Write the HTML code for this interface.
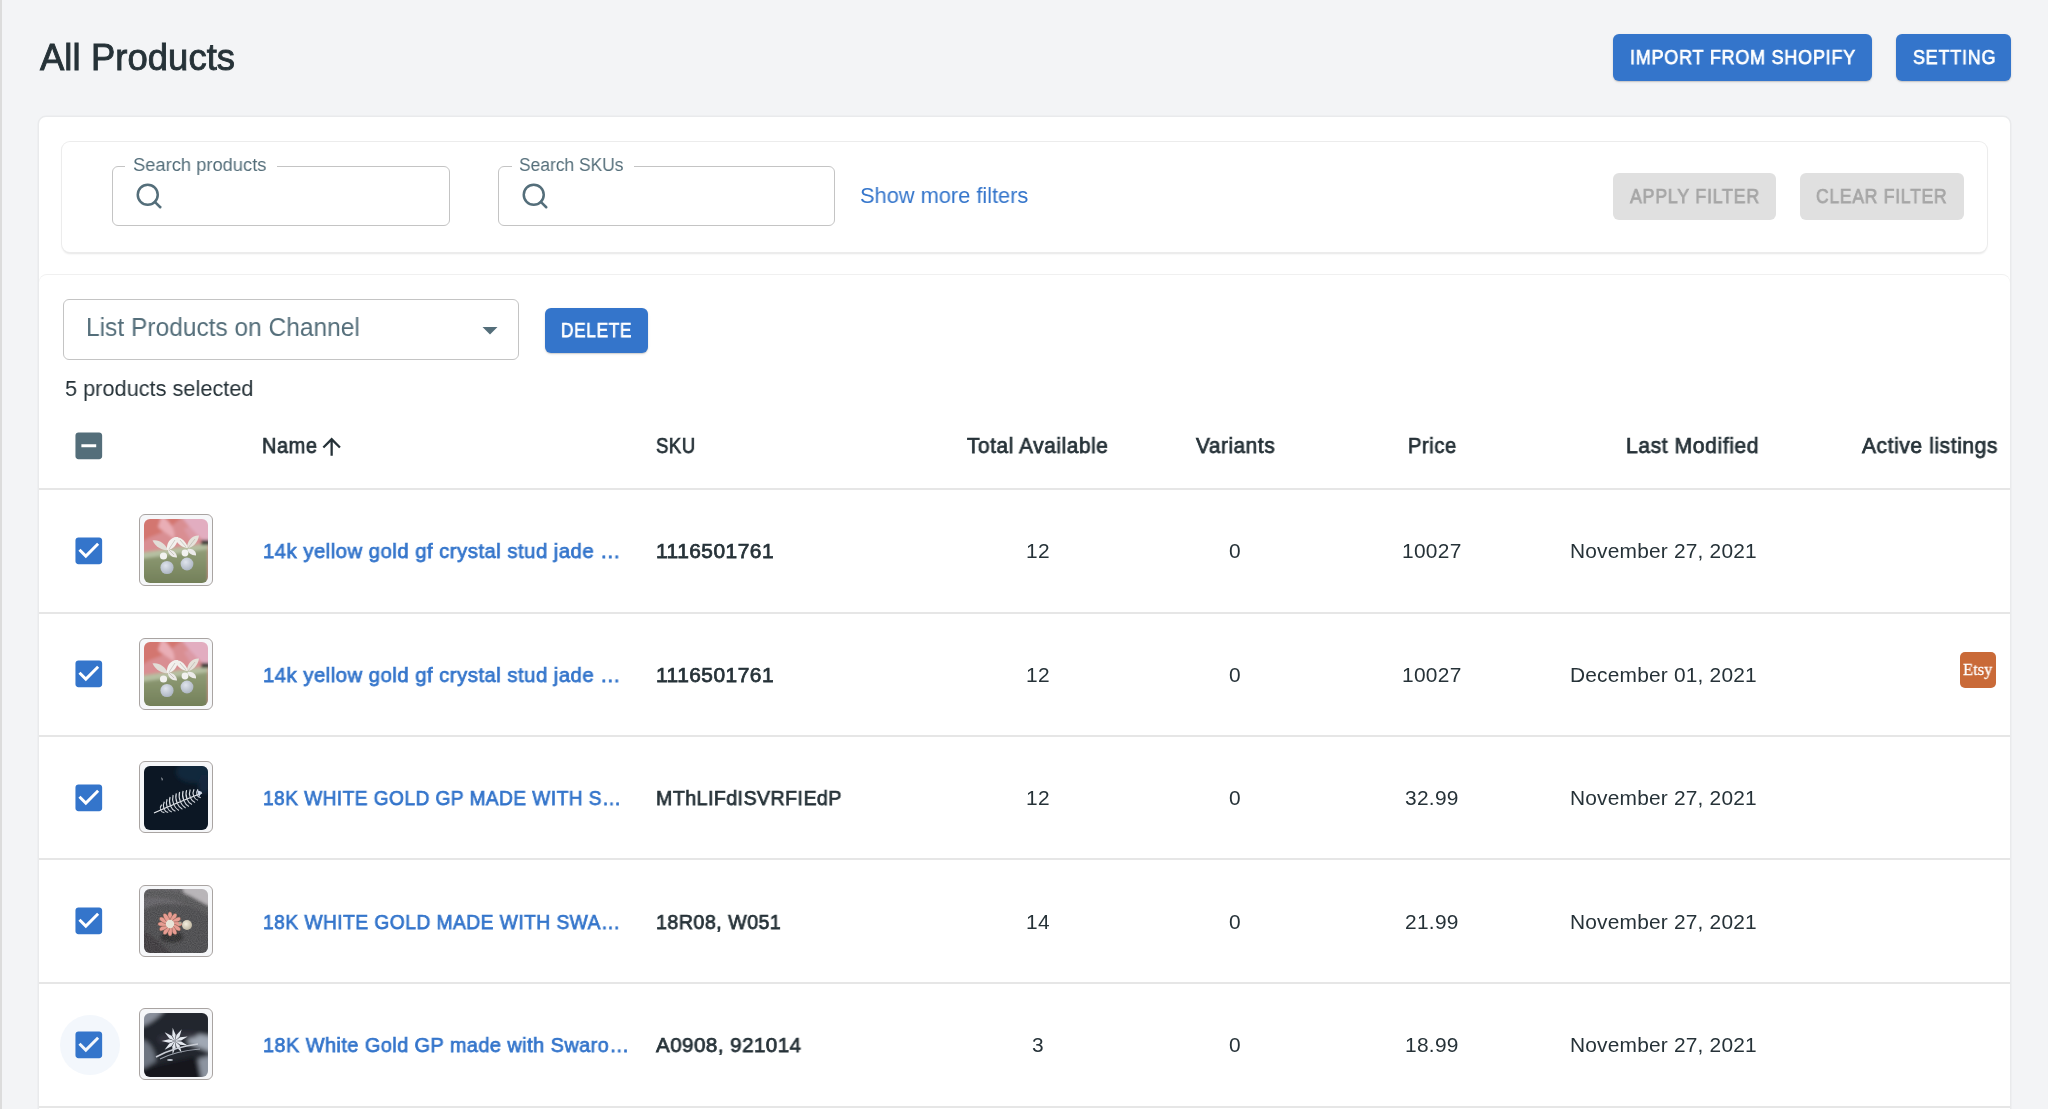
<!DOCTYPE html>
<html><head><meta charset="utf-8"><style>
html,body{margin:0;padding:0;}
body{width:2048px;height:1109px;overflow:hidden;position:relative;background:#f3f4f6;font-family:"Liberation Sans",sans-serif;}
.t{position:absolute;white-space:nowrap;will-change:transform;}
.box{position:absolute;box-sizing:border-box;}
</style></head><body>
<div class="box" style="left:0;top:0;width:2px;height:1109px;background:#dcdcdc"></div>
<div class="t" style="left:40.15px;top:39.60px;font-size:36.4px;line-height:36.4px;color:#263238;-webkit-text-stroke:0.9px #263238;letter-spacing:0.082px;">All Products</div>
<div class="box" style="left:1613px;top:34px;width:259px;height:47px;background:#3475cb;border-radius:6px;box-shadow:0 1px 1px rgba(0,0,0,0.12),0 1px 3px rgba(0,0,0,0.10);"></div>
<div class="t" style="left:1630.13px;top:47.40px;font-size:20.2px;line-height:20.2px;color:#fff;-webkit-text-stroke:0.75px #fff;letter-spacing:0.900px;transform:scaleX(0.8892);transform-origin:0 0;">IMPORT FROM SHOPIFY</div>
<div class="box" style="left:1896px;top:34px;width:115px;height:47px;background:#3475cb;border-radius:6px;box-shadow:0 1px 1px rgba(0,0,0,0.12),0 1px 3px rgba(0,0,0,0.10);"></div>
<div class="t" style="left:1912.53px;top:47.40px;font-size:20.2px;line-height:20.2px;color:#fff;-webkit-text-stroke:0.75px #fff;letter-spacing:0.900px;transform:scaleX(0.8872);transform-origin:0 0;">SETTING</div>
<div class="box" style="left:39px;top:117px;width:1971px;height:1100px;background:#fff;border-radius:7px;box-shadow:0 0 0 1.5px #e9eaec;"></div>
<div class="box" style="left:62px;top:142px;width:1925px;height:109.5px;background:#fff;border-radius:8px;box-shadow:0 0 0 1px #ececec,0 1.5px 2px rgba(0,0,0,0.10);"></div>
<div class="box" style="left:112px;top:166px;width:338px;height:60px;border:1.5px solid #c4c4c4;border-radius:6px;"></div>
<div class="box" style="left:124.6px;top:164px;width:152.9px;height:5px;background:#fff;"></div>
<div class="t" style="left:133.40px;top:156.10px;font-size:18.8px;line-height:18.8px;color:#546e7a;transform:scaleX(0.9758);transform-origin:0 0;">Search products</div>
<svg style="position:absolute;left:133.50px;top:181.10px;width:30.0px;height:30.0px" viewBox="0 0 24 24" fill="none" stroke="#546e7a" stroke-width="2" stroke-linecap="round" stroke-linejoin="round"><circle cx="11" cy="11" r="8"/><line x1="21" y1="21" x2="16.65" y2="16.65"/></svg>
<div class="box" style="left:498px;top:166px;width:337px;height:60px;border:1.5px solid #c4c4c4;border-radius:6px;"></div>
<div class="box" style="left:512px;top:164px;width:122px;height:5px;background:#fff;"></div>
<div class="t" style="left:519.00px;top:156.10px;font-size:18.8px;line-height:18.8px;color:#546e7a;transform:scaleX(0.9269);transform-origin:0 0;">Search SKUs</div>
<svg style="position:absolute;left:519.50px;top:181.10px;width:30.0px;height:30.0px" viewBox="0 0 24 24" fill="none" stroke="#546e7a" stroke-width="2" stroke-linecap="round" stroke-linejoin="round"><circle cx="11" cy="11" r="8"/><line x1="21" y1="21" x2="16.65" y2="16.65"/></svg>
<div class="t" style="left:859.80px;top:185.00px;font-size:22.2px;line-height:22.2px;color:#3475cb;transform:scaleX(0.9820);transform-origin:0 0;">Show more filters</div>
<div class="box" style="left:1613px;top:173px;width:163px;height:47px;background:#e0e0e0;border-radius:6px;"></div>
<div class="t" style="left:1629.63px;top:186.00px;font-size:20.2px;line-height:20.2px;color:#a6a6a6;-webkit-text-stroke:0.75px #a6a6a6;letter-spacing:0.900px;transform:scaleX(0.8800);transform-origin:0 0;">APPLY FILTER</div>
<div class="box" style="left:1799.5px;top:173px;width:164.0px;height:47px;background:#e0e0e0;border-radius:6px;"></div>
<div class="t" style="left:1815.72px;top:186.00px;font-size:20.2px;line-height:20.2px;color:#a6a6a6;-webkit-text-stroke:0.75px #a6a6a6;letter-spacing:0.900px;transform:scaleX(0.8655);transform-origin:0 0;">CLEAR FILTER</div>
<div class="box" style="left:39px;top:275px;width:1971px;height:900px;background:#fff;border-radius:8px;box-shadow:0 -1px 0 0 #f0f0f0;"></div>
<div class="box" style="left:63px;top:299px;width:456px;height:61px;border:1.5px solid #c4c4c4;border-radius:6px;"></div>
<div class="t" style="left:86.00px;top:315.40px;font-size:25.2px;line-height:25.2px;color:#546e7a;transform:scaleX(0.9732);transform-origin:0 0;">List Products on Channel</div>
<svg style="position:absolute;left:472.30px;top:312.30px;width:36.00px;height:36.00px;" viewBox="0 0 24 24" fill="#546e7a"><path d="M7 10l5 5 5-5z"/></svg>
<div class="box" style="left:545px;top:308px;width:103px;height:45px;background:#3475cb;border-radius:6px;box-shadow:0 1px 1px rgba(0,0,0,0.12),0 1px 3px rgba(0,0,0,0.10);"></div>
<div class="t" style="left:560.52px;top:320.60px;font-size:19.8px;line-height:19.8px;color:#fff;-webkit-text-stroke:0.75px #fff;letter-spacing:0.900px;transform:scaleX(0.8642);transform-origin:0 0;">DELETE</div>
<div class="t" style="left:64.60px;top:377.60px;font-size:22.2px;line-height:22.2px;color:#263238;transform:scaleX(0.9796);transform-origin:0 0;">5 products selected</div>
<svg style="position:absolute;left:70.95px;top:428.35px;width:35.60px;height:35.60px;" viewBox="0 0 24 24" fill="#546e7a"><path d="M19 3H5c-1.1 0-2 .9-2 2v14c0 1.1.9 2 2 2h14c1.1 0 2-.9 2-2V5c0-1.1-.9-2-2-2zm-2 10H7v-2h10v2z"/></svg>
<div class="t" style="left:262.45px;top:436.00px;font-size:21.4px;line-height:21.4px;color:#263238;-webkit-text-stroke:0.75px #263238;letter-spacing:0.600px;transform:scaleX(0.9340);transform-origin:0 0;">Name</div>
<svg style="position:absolute;left:318.30px;top:433.00px;width:27.30px;height:27.30px;" viewBox="0 0 24 24" fill="#263238"><path d="M4 12l1.41 1.41L11 7.83V20h2V7.83l5.58 5.59L20 12l-8-8-8 8z"/></svg>
<div class="t" style="left:656.22px;top:436.00px;font-size:21.4px;line-height:21.4px;color:#263238;-webkit-text-stroke:0.75px #263238;letter-spacing:0.600px;transform:scaleX(0.8666);transform-origin:0 0;">SKU</div>
<div class="t" style="left:967.47px;top:436.00px;font-size:21.4px;line-height:21.4px;color:#263238;-webkit-text-stroke:0.75px #263238;letter-spacing:0.600px;transform:scaleX(0.9734);transform-origin:0 0;">Total Available</div>
<div class="t" style="left:1195.56px;top:436.00px;font-size:21.4px;line-height:21.4px;color:#263238;-webkit-text-stroke:0.75px #263238;letter-spacing:0.600px;transform:scaleX(0.9697);transform-origin:0 0;">Variants</div>
<div class="t" style="left:1408.35px;top:436.00px;font-size:21.4px;line-height:21.4px;color:#263238;-webkit-text-stroke:0.75px #263238;letter-spacing:0.600px;transform:scaleX(0.9424);transform-origin:0 0;">Price</div>
<div class="t" style="left:1625.77px;top:436.00px;font-size:21.4px;line-height:21.4px;color:#263238;-webkit-text-stroke:0.75px #263238;letter-spacing:0.600px;transform:scaleX(0.9858);transform-origin:0 0;">Last Modified</div>
<div class="t" style="left:1862.37px;top:436.00px;font-size:21.4px;line-height:21.4px;color:#263238;-webkit-text-stroke:0.75px #263238;letter-spacing:0.600px;transform:scaleX(0.9814);transform-origin:0 0;">Active listings</div>
<div class="box" style="left:39px;top:488px;width:1971px;height:2px;background:#e6e6e6"></div>
<svg style="position:absolute;left:71.05px;top:532.70px;width:35.60px;height:35.60px;" viewBox="0 0 24 24" fill="#3475cb"><path d="M19 3H5c-1.11 0-2 .9-2 2v14c0 1.1.89 2 2 2h14c1.11 0 2-.9 2-2V5c0-1.1-.89-2-2-2zm-9 14l-5-5 1.41-1.41L10 14.17l7.59-7.59L19 8l-9 9z"/></svg>
<div class="box" style="left:139px;top:514.25px;width:74px;height:72px;border:1.5px solid #a9a4a2;border-radius:6px;background:#f6f7f9;"></div>
<div class="box" style="left:144px;top:518.75px;width:64px;height:64px;border-radius:6px;overflow:hidden;"><svg width="64" height="64" viewBox="0 0 64 64" style="display:block"><defs><filter id="b0" x="-20%" y="-20%" width="140%" height="140%"><feGaussianBlur stdDeviation="1.6"/></filter>
<filter id="s0" x="-20%" y="-20%" width="140%" height="140%"><feGaussianBlur stdDeviation="0.6"/></filter>
<linearGradient id="g0" x1="0" y1="0" x2="0" y2="1"><stop offset="0" stop-color="#96a27c"/><stop offset="1" stop-color="#6f7c55"/></linearGradient>
<radialGradient id="p0" cx="0.4" cy="0.35" r="0.7"><stop offset="0" stop-color="#dfe4ec"/><stop offset="1" stop-color="#aab3c0"/></radialGradient></defs><g filter="url(#b0)">
<rect x="-4" y="-4" width="72" height="72" fill="#d98e92"/>
<path d="M-4 -4H40C30 6 20 14 6 18L-4 24Z" fill="#d3766f"/>
<path d="M18 -4C26 4 32 10 30 20C26 16 18 12 14 8Z" fill="#e9aeb6"/>
<path d="M36 -4H68V26C58 22 50 14 44 6Z" fill="#e2adc0"/>
<path d="M44 8C52 12 56 18 50 26C46 20 42 14 40 10Z" fill="#dc9aa6"/>
<path d="M-4 34L64 24V68H-4Z" fill="url(#g0)"/>
<path d="M-4 34L64 24V30L-4 40Z" fill="#b6c0a2"/>
<rect x="57" y="21" width="9" height="5" fill="#3a3a36"/>
</g>
<g filter="url(#s0)">
<path d="M8.5 21.5C14 20 21 24 24 31C20 32 12 29 8.5 21.5Z" fill="#e2ded8"/>
<path d="M23 31C22 24 27 17 34 18C34 25 29 31 23 31Z" fill="#f3f1ee"/>
<path d="M24 31C28 30 33 34 33 38.5C28 39 24 35 24 31Z" fill="#eceae8"/>
<path d="M30.5 18.5C36 17 42 22 44 29C39 29 33 25 30.5 18.5Z" fill="#f1efeb"/>
<path d="M43 29C43 22 48 16 55 16.5C54 23 49 29 43 29Z" fill="#e6e2da"/>
<path d="M43.5 30C48 29 52.5 32 52 36.5C47 36.5 43.5 33 43.5 30Z" fill="#ecebea"/>
<path d="M25 30L31 21M25 31L30 36M42 28L36 21M44 29L51 20" stroke="#a9a59c" stroke-width="0.5" fill="none"/>
<circle cx="19.5" cy="37" r="3.6" fill="#f2f2f0"/>
<circle cx="41" cy="34" r="3.4" fill="#f2f2f0"/>
<circle cx="23" cy="48.5" r="6.6" fill="url(#p0)"/>
<circle cx="43" cy="45" r="6.4" fill="url(#p0)"/>
</g></svg></div>
<div class="t" style="left:262.86px;top:541.05px;font-size:20.9px;line-height:20.9px;color:#3475cb;-webkit-text-stroke:0.75px #3475cb;letter-spacing:0.500px;transform:scaleX(0.9715);transform-origin:0 0;">14k yellow gold gf crystal stud jade …</div>
<div class="t" style="left:656.37px;top:541.05px;font-size:20.9px;line-height:20.9px;color:#263238;-webkit-text-stroke:0.75px #263238;letter-spacing:0.500px;transform:scaleX(0.9977);transform-origin:0 0;">1116501761</div>
<div class="t" style="left:1026.22px;top:541.05px;font-size:20.9px;line-height:20.9px;color:#263238;letter-spacing:0.300px;">12</div>
<div class="t" style="left:1229.20px;top:541.05px;font-size:20.9px;line-height:20.9px;color:#263238;">0</div>
<div class="t" style="left:1402.35px;top:541.05px;font-size:20.9px;line-height:20.9px;color:#263238;letter-spacing:0.300px;">10027</div>
<div class="t" style="left:1570.25px;top:541.05px;font-size:20.9px;line-height:20.9px;color:#263238;letter-spacing:0.200px;">November 27, 2021</div>
<div class="box" style="left:39px;top:612px;width:1971px;height:2px;background:#e6e6e6"></div>
<svg style="position:absolute;left:71.05px;top:656.20px;width:35.60px;height:35.60px;" viewBox="0 0 24 24" fill="#3475cb"><path d="M19 3H5c-1.11 0-2 .9-2 2v14c0 1.1.89 2 2 2h14c1.11 0 2-.9 2-2V5c0-1.1-.89-2-2-2zm-9 14l-5-5 1.41-1.41L10 14.17l7.59-7.59L19 8l-9 9z"/></svg>
<div class="box" style="left:139px;top:637.75px;width:74px;height:72px;border:1.5px solid #a9a4a2;border-radius:6px;background:#f6f7f9;"></div>
<div class="box" style="left:144px;top:642.25px;width:64px;height:64px;border-radius:6px;overflow:hidden;"><svg width="64" height="64" viewBox="0 0 64 64" style="display:block"><defs><filter id="b1" x="-20%" y="-20%" width="140%" height="140%"><feGaussianBlur stdDeviation="1.6"/></filter>
<filter id="s1" x="-20%" y="-20%" width="140%" height="140%"><feGaussianBlur stdDeviation="0.6"/></filter>
<linearGradient id="g1" x1="0" y1="0" x2="0" y2="1"><stop offset="0" stop-color="#96a27c"/><stop offset="1" stop-color="#6f7c55"/></linearGradient>
<radialGradient id="p1" cx="0.4" cy="0.35" r="0.7"><stop offset="0" stop-color="#dfe4ec"/><stop offset="1" stop-color="#aab3c0"/></radialGradient></defs><g filter="url(#b1)">
<rect x="-4" y="-4" width="72" height="72" fill="#d98e92"/>
<path d="M-4 -4H40C30 6 20 14 6 18L-4 24Z" fill="#d3766f"/>
<path d="M18 -4C26 4 32 10 30 20C26 16 18 12 14 8Z" fill="#e9aeb6"/>
<path d="M36 -4H68V26C58 22 50 14 44 6Z" fill="#e2adc0"/>
<path d="M44 8C52 12 56 18 50 26C46 20 42 14 40 10Z" fill="#dc9aa6"/>
<path d="M-4 34L64 24V68H-4Z" fill="url(#g1)"/>
<path d="M-4 34L64 24V30L-4 40Z" fill="#b6c0a2"/>
<rect x="57" y="21" width="9" height="5" fill="#3a3a36"/>
</g>
<g filter="url(#s1)">
<path d="M8.5 21.5C14 20 21 24 24 31C20 32 12 29 8.5 21.5Z" fill="#e2ded8"/>
<path d="M23 31C22 24 27 17 34 18C34 25 29 31 23 31Z" fill="#f3f1ee"/>
<path d="M24 31C28 30 33 34 33 38.5C28 39 24 35 24 31Z" fill="#eceae8"/>
<path d="M30.5 18.5C36 17 42 22 44 29C39 29 33 25 30.5 18.5Z" fill="#f1efeb"/>
<path d="M43 29C43 22 48 16 55 16.5C54 23 49 29 43 29Z" fill="#e6e2da"/>
<path d="M43.5 30C48 29 52.5 32 52 36.5C47 36.5 43.5 33 43.5 30Z" fill="#ecebea"/>
<path d="M25 30L31 21M25 31L30 36M42 28L36 21M44 29L51 20" stroke="#a9a59c" stroke-width="0.5" fill="none"/>
<circle cx="19.5" cy="37" r="3.6" fill="#f2f2f0"/>
<circle cx="41" cy="34" r="3.4" fill="#f2f2f0"/>
<circle cx="23" cy="48.5" r="6.6" fill="url(#p1)"/>
<circle cx="43" cy="45" r="6.4" fill="url(#p1)"/>
</g></svg></div>
<div class="t" style="left:262.86px;top:664.55px;font-size:20.9px;line-height:20.9px;color:#3475cb;-webkit-text-stroke:0.75px #3475cb;letter-spacing:0.500px;transform:scaleX(0.9715);transform-origin:0 0;">14k yellow gold gf crystal stud jade …</div>
<div class="t" style="left:656.37px;top:664.55px;font-size:20.9px;line-height:20.9px;color:#263238;-webkit-text-stroke:0.75px #263238;letter-spacing:0.500px;transform:scaleX(0.9977);transform-origin:0 0;">1116501761</div>
<div class="t" style="left:1026.22px;top:664.55px;font-size:20.9px;line-height:20.9px;color:#263238;letter-spacing:0.300px;">12</div>
<div class="t" style="left:1229.20px;top:664.55px;font-size:20.9px;line-height:20.9px;color:#263238;">0</div>
<div class="t" style="left:1402.35px;top:664.55px;font-size:20.9px;line-height:20.9px;color:#263238;letter-spacing:0.300px;">10027</div>
<div class="t" style="left:1570.25px;top:664.55px;font-size:20.9px;line-height:20.9px;color:#263238;letter-spacing:0.200px;">December 01, 2021</div>
<div class="box" style="left:1960px;top:651.75px;width:36px;height:36px;border-radius:5px;background:#c96a38;"></div>
<div class="t" style="left:1963.14px;top:661.05px;font-size:17.5px;line-height:17.5px;color:#fff;-webkit-text-stroke:0.3px #fff;transform:scaleX(0.9457);transform-origin:0 0;font-family:'Liberation Serif',serif;">Etsy</div>
<div class="box" style="left:39px;top:735px;width:1971px;height:2px;background:#e6e6e6"></div>
<svg style="position:absolute;left:71.05px;top:779.70px;width:35.60px;height:35.60px;" viewBox="0 0 24 24" fill="#3475cb"><path d="M19 3H5c-1.11 0-2 .9-2 2v14c0 1.1.89 2 2 2h14c1.11 0 2-.9 2-2V5c0-1.1-.89-2-2-2zm-9 14l-5-5 1.41-1.41L10 14.17l7.59-7.59L19 8l-9 9z"/></svg>
<div class="box" style="left:139px;top:761.25px;width:74px;height:72px;border:1.5px solid #a9a4a2;border-radius:6px;background:#f6f7f9;"></div>
<div class="box" style="left:144px;top:765.75px;width:64px;height:64px;border-radius:6px;overflow:hidden;"><svg width="64" height="64" viewBox="0 0 64 64" style="display:block"><defs><filter id="b2" x="-20%" y="-20%" width="140%" height="140%"><feGaussianBlur stdDeviation="2"/></filter>
<filter id="s2" x="-20%" y="-20%" width="140%" height="140%"><feGaussianBlur stdDeviation="0.4"/></filter></defs><rect width="64" height="64" fill="#0c1724"/>
<g filter="url(#b2)"><ellipse cx="50" cy="6" rx="18" ry="11" fill="#1a3650" opacity="0.55"/><ellipse cx="60" cy="18" rx="6" ry="10" fill="#13283c"/></g>
<g filter="url(#s2)">
<path d="M10 47Q30 38 58 27" stroke="#e6e9ee" stroke-width="1.3" fill="none"/>
<path d="M16.6 44.1Q15.5 41.5 17.6 38.6" stroke="#d8dce2" stroke-width="1.15" fill="none"/><path d="M16.6 44.1Q17.5 46.3 20.4 46.6" stroke="#c9cdd4" stroke-width="1.1" fill="none"/><path d="M19.9 42.7Q18.5 39.2 20.3 35.7" stroke="#d8dce2" stroke-width="1.15" fill="none"/><path d="M19.9 42.7Q21.1 45.7 24.2 46.5" stroke="#c9cdd4" stroke-width="1.1" fill="none"/><path d="M23.2 41.4Q21.5 37.2 23.1 33.2" stroke="#d8dce2" stroke-width="1.15" fill="none"/><path d="M23.2 41.4Q24.7 44.9 27.8 46.0" stroke="#c9cdd4" stroke-width="1.1" fill="none"/><path d="M26.5 40.0Q24.6 35.3 26.1 31.0" stroke="#d8dce2" stroke-width="1.15" fill="none"/><path d="M26.5 40.0Q28.2 43.9 31.4 45.3" stroke="#c9cdd4" stroke-width="1.1" fill="none"/><path d="M29.8 38.6Q27.8 33.6 29.1 29.0" stroke="#d8dce2" stroke-width="1.15" fill="none"/><path d="M29.8 38.6Q31.6 42.8 34.9 44.4" stroke="#c9cdd4" stroke-width="1.1" fill="none"/><path d="M33.2 37.3Q31.0 32.0 32.3 27.4" stroke="#d8dce2" stroke-width="1.15" fill="none"/><path d="M33.2 37.3Q35.0 41.6 38.4 43.3" stroke="#c9cdd4" stroke-width="1.1" fill="none"/><path d="M36.5 35.9Q34.3 30.6 35.6 26.0" stroke="#d8dce2" stroke-width="1.15" fill="none"/><path d="M36.5 35.9Q38.3 40.3 41.7 41.9" stroke="#c9cdd4" stroke-width="1.1" fill="none"/><path d="M39.8 34.5Q37.7 29.4 39.1 24.9" stroke="#d8dce2" stroke-width="1.15" fill="none"/><path d="M39.8 34.5Q41.5 38.8 44.9 40.4" stroke="#c9cdd4" stroke-width="1.1" fill="none"/><path d="M43.1 33.2Q41.1 28.4 42.6 24.1" stroke="#d8dce2" stroke-width="1.15" fill="none"/><path d="M43.1 33.2Q44.7 37.1 48.0 38.6" stroke="#c9cdd4" stroke-width="1.1" fill="none"/><path d="M46.4 31.8Q44.6 27.5 46.2 23.5" stroke="#d8dce2" stroke-width="1.15" fill="none"/><path d="M46.4 31.8Q47.9 35.3 51.1 36.5" stroke="#c9cdd4" stroke-width="1.1" fill="none"/><path d="M49.7 30.4Q48.2 26.8 50.0 23.3" stroke="#d8dce2" stroke-width="1.15" fill="none"/><path d="M49.7 30.4Q51.0 33.4 54.0 34.3" stroke="#c9cdd4" stroke-width="1.1" fill="none"/><path d="M53.0 29.1Q51.9 26.3 53.9 23.3" stroke="#d8dce2" stroke-width="1.15" fill="none"/><path d="M53.0 29.1Q54.0 31.3 56.8 31.7" stroke="#c9cdd4" stroke-width="1.1" fill="none"/>
<path d="M53 24L58 26L55 31Z" fill="#cdd8ea"/>
<path d="M17 11l2 2l-1 2z" fill="#9aa0a8"/>
</g></svg></div>
<div class="t" style="left:262.84px;top:788.05px;font-size:20.9px;line-height:20.9px;color:#3475cb;-webkit-text-stroke:0.75px #3475cb;letter-spacing:0.500px;transform:scaleX(0.9149);transform-origin:0 0;">18K WHITE GOLD GP MADE WITH S…</div>
<div class="t" style="left:656.35px;top:788.05px;font-size:20.9px;line-height:20.9px;color:#263238;-webkit-text-stroke:0.75px #263238;letter-spacing:0.500px;transform:scaleX(0.9368);transform-origin:0 0;">MThLIFdISVRFIEdP</div>
<div class="t" style="left:1026.22px;top:788.05px;font-size:20.9px;line-height:20.9px;color:#263238;letter-spacing:0.300px;">12</div>
<div class="t" style="left:1229.20px;top:788.05px;font-size:20.9px;line-height:20.9px;color:#263238;">0</div>
<div class="t" style="left:1405.25px;top:788.05px;font-size:20.9px;line-height:20.9px;color:#263238;letter-spacing:0.300px;">32.99</div>
<div class="t" style="left:1570.25px;top:788.05px;font-size:20.9px;line-height:20.9px;color:#263238;letter-spacing:0.200px;">November 27, 2021</div>
<div class="box" style="left:39px;top:858px;width:1971px;height:2px;background:#e6e6e6"></div>
<svg style="position:absolute;left:71.05px;top:903.20px;width:35.60px;height:35.60px;" viewBox="0 0 24 24" fill="#3475cb"><path d="M19 3H5c-1.11 0-2 .9-2 2v14c0 1.1.89 2 2 2h14c1.11 0 2-.9 2-2V5c0-1.1-.89-2-2-2zm-9 14l-5-5 1.41-1.41L10 14.17l7.59-7.59L19 8l-9 9z"/></svg>
<div class="box" style="left:139px;top:884.75px;width:74px;height:72px;border:1.5px solid #a9a4a2;border-radius:6px;background:#f6f7f9;"></div>
<div class="box" style="left:144px;top:889.25px;width:64px;height:64px;border-radius:6px;overflow:hidden;"><svg width="64" height="64" viewBox="0 0 64 64" style="display:block"><defs><filter id="b3" x="-20%" y="-20%" width="140%" height="140%"><feGaussianBlur stdDeviation="1.8"/></filter>
<filter id="s3" x="-20%" y="-20%" width="140%" height="140%"><feGaussianBlur stdDeviation="0.5"/></filter>
<filter id="n3"><feTurbulence type="fractalNoise" baseFrequency="0.9" numOctaves="1" seed="3"/><feColorMatrix values="0 0 0 0 0.5  0 0 0 0 0.5  0 0 0 0 0.5  0 0 0 0.35 0"/></filter>
<radialGradient id="pe3" cx="0.4" cy="0.4" r="0.7"><stop offset="0" stop-color="#f4efe0"/><stop offset="1" stop-color="#b9b09a"/></radialGradient></defs><g filter="url(#b3)">
<rect x="-4" y="-4" width="72" height="72" fill="#3e3c3f"/>
<path d="M-4 -4H68V20C50 18 30 12 10 16L-4 22Z" fill="#59575b"/>
<path d="M-4 10C14 6 34 10 60 24L68 30V14C50 4 20 -2 -4 2Z" fill="#4a484b"/>
<path d="M38 -4H68V18C58 14 50 8 40 4Z" fill="#b8b4b8"/>
<path d="M-4 40C10 46 20 56 30 68H-4Z" fill="#2e2c2e"/>
<ellipse cx="28" cy="48" rx="12" ry="6" fill="#1e1c1e"/>
</g>
<rect width="64" height="64" filter="url(#n3)"/>
<g filter="url(#s3)">
<ellipse cx="26" cy="28" rx="2.3" ry="5.2" fill="#e89c92" stroke="#5a4a3a" stroke-width="0.4" transform="rotate(0 26 35)"/><ellipse cx="26" cy="28" rx="2.3" ry="5.2" fill="#e89c92" stroke="#5a4a3a" stroke-width="0.4" transform="rotate(30 26 35)"/><ellipse cx="26" cy="28" rx="2.3" ry="5.2" fill="#e89c92" stroke="#5a4a3a" stroke-width="0.4" transform="rotate(60 26 35)"/><ellipse cx="26" cy="28" rx="2.3" ry="5.2" fill="#e89c92" stroke="#5a4a3a" stroke-width="0.4" transform="rotate(90 26 35)"/><ellipse cx="26" cy="28" rx="2.3" ry="5.2" fill="#e89c92" stroke="#5a4a3a" stroke-width="0.4" transform="rotate(120 26 35)"/><ellipse cx="26" cy="28" rx="2.3" ry="5.2" fill="#e89c92" stroke="#5a4a3a" stroke-width="0.4" transform="rotate(150 26 35)"/><ellipse cx="26" cy="28" rx="2.3" ry="5.2" fill="#e89c92" stroke="#5a4a3a" stroke-width="0.4" transform="rotate(180 26 35)"/><ellipse cx="26" cy="28" rx="2.3" ry="5.2" fill="#e89c92" stroke="#5a4a3a" stroke-width="0.4" transform="rotate(210 26 35)"/><ellipse cx="26" cy="28" rx="2.3" ry="5.2" fill="#e89c92" stroke="#5a4a3a" stroke-width="0.4" transform="rotate(240 26 35)"/><ellipse cx="26" cy="28" rx="2.3" ry="5.2" fill="#e89c92" stroke="#5a4a3a" stroke-width="0.4" transform="rotate(270 26 35)"/><ellipse cx="26" cy="28" rx="2.3" ry="5.2" fill="#e89c92" stroke="#5a4a3a" stroke-width="0.4" transform="rotate(300 26 35)"/><ellipse cx="26" cy="28" rx="2.3" ry="5.2" fill="#e89c92" stroke="#5a4a3a" stroke-width="0.4" transform="rotate(330 26 35)"/>
<circle cx="26" cy="35" r="4.2" fill="#e8e4d8"/>
<circle cx="43" cy="36" r="5" fill="url(#pe3)"/>
<circle cx="36" cy="34" r="1.5" fill="#b0aa98"/>
</g></svg></div>
<div class="t" style="left:262.85px;top:911.55px;font-size:20.9px;line-height:20.9px;color:#3475cb;-webkit-text-stroke:0.75px #3475cb;letter-spacing:0.500px;transform:scaleX(0.9201);transform-origin:0 0;">18K WHITE GOLD MADE WITH SWA…</div>
<div class="t" style="left:656.35px;top:911.55px;font-size:20.9px;line-height:20.9px;color:#263238;-webkit-text-stroke:0.75px #263238;letter-spacing:0.500px;transform:scaleX(0.9404);transform-origin:0 0;">18R08, W051</div>
<div class="t" style="left:1026.22px;top:911.55px;font-size:20.9px;line-height:20.9px;color:#263238;letter-spacing:0.300px;">14</div>
<div class="t" style="left:1229.20px;top:911.55px;font-size:20.9px;line-height:20.9px;color:#263238;">0</div>
<div class="t" style="left:1405.25px;top:911.55px;font-size:20.9px;line-height:20.9px;color:#263238;letter-spacing:0.300px;">21.99</div>
<div class="t" style="left:1570.25px;top:911.55px;font-size:20.9px;line-height:20.9px;color:#263238;letter-spacing:0.200px;">November 27, 2021</div>
<div class="box" style="left:39px;top:982px;width:1971px;height:2px;background:#e6e6e6"></div>
<div class="box" style="left:59.5px;top:1014.75px;width:60px;height:60px;border-radius:50%;background:#f3f7fc"></div>
<svg style="position:absolute;left:71.05px;top:1026.70px;width:35.60px;height:35.60px;" viewBox="0 0 24 24" fill="#3475cb"><path d="M19 3H5c-1.11 0-2 .9-2 2v14c0 1.1.89 2 2 2h14c1.11 0 2-.9 2-2V5c0-1.1-.89-2-2-2zm-9 14l-5-5 1.41-1.41L10 14.17l7.59-7.59L19 8l-9 9z"/></svg>
<div class="box" style="left:139px;top:1008.25px;width:74px;height:72px;border:1.5px solid #a9a4a2;border-radius:6px;background:#f6f7f9;"></div>
<div class="box" style="left:144px;top:1012.75px;width:64px;height:64px;border-radius:6px;overflow:hidden;"><svg width="64" height="64" viewBox="0 0 64 64" style="display:block"><defs><filter id="b4" x="-20%" y="-20%" width="140%" height="140%"><feGaussianBlur stdDeviation="2.2"/></filter>
<filter id="s4" x="-20%" y="-20%" width="140%" height="140%"><feGaussianBlur stdDeviation="0.5"/></filter></defs><g filter="url(#b4)">
<rect x="-4" y="-4" width="72" height="72" fill="#24262e"/>
<path d="M-4 -4H22C14 4 8 10 -4 14Z" fill="#8a909c"/>
<path d="M-4 26C4 28 10 34 12 48L-4 58Z" fill="#6d7480"/>
<path d="M44 22C54 20 62 22 68 24V40C60 36 52 34 44 30Z" fill="#a0a8b4"/>
<path d="M54 46L68 42V68H58Z" fill="#8d94a0"/>
<path d="M-4 56L50 44L56 68H-4Z" fill="#17181c"/>
<path d="M16 30C26 26 40 28 52 24L56 20C42 18 28 20 14 24Z" fill="#34363f"/>
</g>
<g filter="url(#s4)">
<path d="M31 28L29.3 22L31 14.5L32.7 22Z" fill="#e4e8ef" transform="rotate(-10 31 28)"/><path d="M31 28L29.3 22L31 14.5L32.7 22Z" fill="#e4e8ef" transform="rotate(30 31 28)"/><path d="M31 28L29.3 22L31 14.5L32.7 22Z" fill="#e4e8ef" transform="rotate(70 31 28)"/><path d="M31 28L29.3 22L31 14.5L32.7 22Z" fill="#e4e8ef" transform="rotate(110 31 28)"/><path d="M31 28L29.3 22L31 14.5L32.7 22Z" fill="#e4e8ef" transform="rotate(150 31 28)"/><path d="M31 28L29.3 22L31 14.5L32.7 22Z" fill="#e4e8ef" transform="rotate(190 31 28)"/><path d="M31 28L29.3 22L31 14.5L32.7 22Z" fill="#e4e8ef" transform="rotate(230 31 28)"/><path d="M31 28L29.3 22L31 14.5L32.7 22Z" fill="#e4e8ef" transform="rotate(270 31 28)"/><path d="M31 28L29.3 22L31 14.5L32.7 22Z" fill="#e4e8ef" transform="rotate(310 31 28)"/>
<path d="M12 44Q30 34 54 31" stroke="#c8ccd4" stroke-width="1.6" fill="none"/>
<path d="M16 46Q32 38 56 36" stroke="#9ea4ae" stroke-width="1.2" fill="none"/>
<ellipse cx="26" cy="47" rx="3" ry="1" fill="#c0c6d0"/>
</g></svg></div>
<div class="t" style="left:262.86px;top:1035.05px;font-size:20.9px;line-height:20.9px;color:#3475cb;-webkit-text-stroke:0.75px #3475cb;letter-spacing:0.500px;transform:scaleX(0.9501);transform-origin:0 0;">18K White Gold GP made with Swaro…</div>
<div class="t" style="left:656.37px;top:1035.05px;font-size:20.9px;line-height:20.9px;color:#263238;-webkit-text-stroke:0.75px #263238;letter-spacing:0.500px;transform:scaleX(0.9821);transform-origin:0 0;">A0908, 921014</div>
<div class="t" style="left:1032.20px;top:1035.05px;font-size:20.9px;line-height:20.9px;color:#263238;letter-spacing:0.300px;">3</div>
<div class="t" style="left:1229.20px;top:1035.05px;font-size:20.9px;line-height:20.9px;color:#263238;">0</div>
<div class="t" style="left:1405.25px;top:1035.05px;font-size:20.9px;line-height:20.9px;color:#263238;letter-spacing:0.300px;">18.99</div>
<div class="t" style="left:1570.25px;top:1035.05px;font-size:20.9px;line-height:20.9px;color:#263238;letter-spacing:0.200px;">November 27, 2021</div>
<div class="box" style="left:39px;top:1106px;width:1971px;height:2px;background:#e6e6e6"></div>
</body></html>
